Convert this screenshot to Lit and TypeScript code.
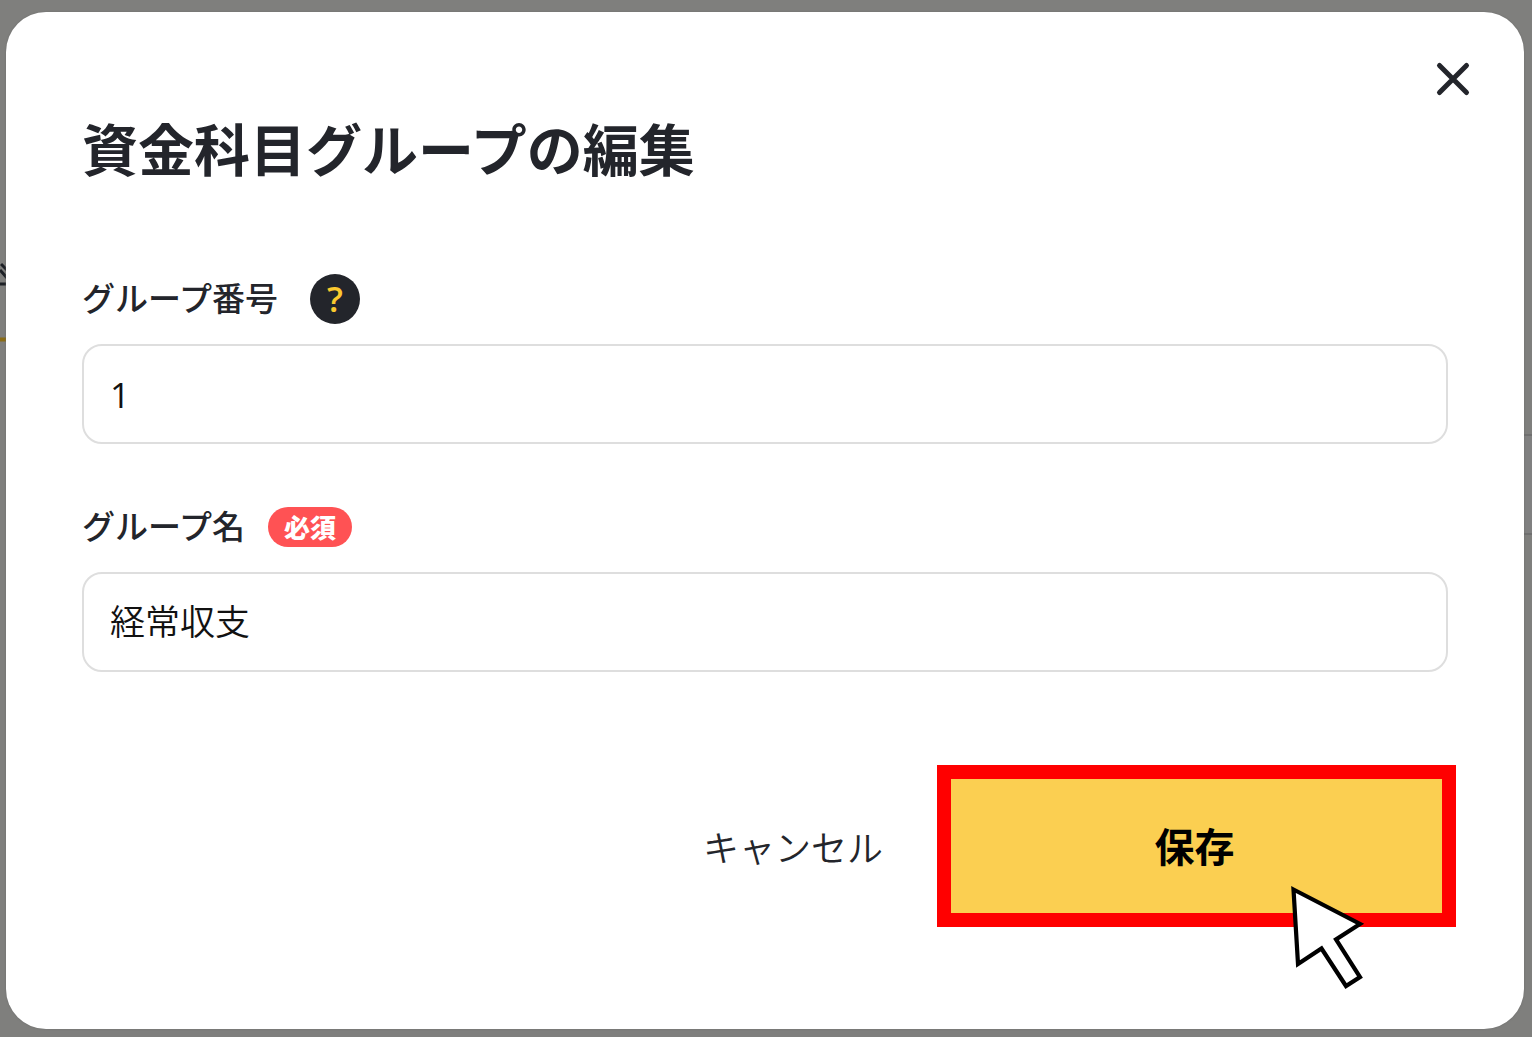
import { LitElement, html, css } from "lit";
import { customElement, state } from "lit/decorators.js";

@customElement("group-edit-dialog")
class GroupEditDialog extends LitElement {
  static styles = css`
    :host {
      display: flex;
      flex: 1;
      position: relative;
      font-family: "Noto Sans CJK JP", "Noto Sans", sans-serif;
      color: #23252b;
    }
    * {
      box-sizing: border-box;
    }
    button,
    input {
      font: inherit;
      color: inherit;
      margin: 0;
    }
    button {
      cursor: pointer;
    }
    .dialog {
      flex: 1;
      display: flex;
      flex-direction: column;
      padding: 39px 76px 102px;
      border-radius: 40px;
      background: #fff;
      box-shadow: 0 0 2px #6a6a69;
    }
    .close {
      display: grid;
      place-items: center;
      align-self: flex-end;
      width: 56px;
      height: 56px;
      margin-right: -33px;
      padding: 0;
      border: 0;
      background: none;
    }
    h1 {
      margin: 0 0 86px;
      font-size: 56px;
      line-height: 80px;
      font-weight: 700;
    }
    .field {
      display: flex;
      flex-direction: column;
      gap: 19px;
      margin-bottom: 57px;
    }
    .caption {
      display: flex;
      align-items: center;
      height: 52px;
      font-size: 33px;
      line-height: 48px;
      font-weight: 500;
    }
    label {
      padding-bottom: 4px;
    }
    .help {
      width: 50px;
      height: 50px;
      margin-left: 32px;
      padding: 0;
      border: 0;
      border-radius: 50%;
      background: #23252b;
      color: #fbc92f;
      font-family: "Open Sans", sans-serif;
      font-size: 35px;
      line-height: 50px;
      font-weight: 600;
      text-align: center;
    }
    .required {
      height: 40px;
      margin-left: 23px;
      padding: 0 16px;
      border-radius: 20px;
      background: #ff5254;
      color: #fff;
      font-size: 26px;
      line-height: 40px;
      font-weight: 900;
    }
    input {
      width: 100%;
      height: 100px;
      padding: 0 26px 6px;
      border: 2px solid #dedede;
      border-radius: 20px;
      background: #fff;
      color: #111;
      font-size: 35px;
      font-weight: 350;
      outline: none;
    }
    .numeric {
      padding-bottom: 0;
      font-family: "Open Sans", sans-serif;
      font-weight: 400;
    }
    .actions {
      display: flex;
      align-items: center;
      justify-content: flex-end;
      gap: 54px;
      margin: 36px -8px 0 0;
    }
    .cancel {
      padding: 0;
      border: 0;
      background: none;
      font-size: 36px;
      line-height: 52px;
      font-weight: 350;
    }
    .save {
      position: relative;
      display: flex;
      flex: 0 1 519px;
      border: 14px solid #f00;
    }
    .save button {
      flex: 1;
      height: 134px;
      padding: 0 4px 2px 0;
      border: 0;
      background: #fbcf51;
      color: #000;
      font-size: 40px;
      font-weight: 700;
    }
    .pointer {
      position: absolute;
      left: 338px;
      top: 102px;
      pointer-events: none;
    }
  `;

  @state() private number = "1";
  @state() private name = "経常収支";

  render() {
    return html`
      <section class="dialog" role="dialog" aria-labelledby="title">
        <button class="close" type="button" aria-label="閉じる">
          <svg width="36" height="36" viewBox="0 0 36 36" fill="none" stroke="#23252b" stroke-width="5" stroke-linecap="round">
            <path d="M4.500 4.500L31.500 31.500M31.500 4.500L4.500 31.500" />
          </svg>
        </button>
        <h1 id="title">資金科目グループの編集</h1>
        <div class="field">
          <div class="caption">
            <label for="number">グループ番号</label>
            <button class="help" type="button">?</button>
          </div>
          <input id="number" class="numeric" type="text" inputmode="numeric" .value=${this.number}
            @input=${(e: Event) => (this.number = (e.target as HTMLInputElement).value)} />
        </div>
        <div class="field">
          <div class="caption">
            <label for="name">グループ名</label>
            <span class="required">必須</span>
          </div>
          <input id="name" type="text" required .value=${this.name}
            @input=${(e: Event) => (this.name = (e.target as HTMLInputElement).value)} />
        </div>
        <div class="actions">
          <button class="cancel" type="button">キャンセル</button>
          <div class="save">
            <button type="button">保存</button>
            <svg class="pointer" width="80" height="110" viewBox="0 0 80 110">
              <path d="M4.500 8.500L71 43L47 58.500L71 96L57 105L32.500 67.500L9 83Z" fill="#fff" stroke="#000" stroke-width="4.200" />
            </svg>
          </div>
        </div>
      </section>
    `;
  }
}

@customElement("app-root")
class AppRoot extends LitElement {
  static styles = css`
    :host {
      display: flex;
      position: relative;
      box-sizing: border-box;
      min-height: 100vh;
      padding: 12px 8px 8px 6px;
      background: #7f7f7d;
    }
    .behind {
      position: absolute;
      top: 0;
    }
    .left {
      left: 0;
    }
    .right {
      right: 0;
    }
  `;

  render() {
    return html`
      <svg class="behind left" width="8" height="360" fill="none" aria-hidden="true">
        <path d="M1 264L8 271M0 270L8 279M0 284H8" stroke="#1d2026" stroke-width="3" />
        <path d="M0 339.500H8" stroke="#8a6c17" stroke-width="4" />
      </svg>
      <svg class="behind right" width="9" height="560" aria-hidden="true">
        <path d="M0 435H9V534H0Z" fill="#808080" />
        <path d="M0 435H9M0 534H9" stroke="#6f6f6f" stroke-width="2" />
      </svg>
      <group-edit-dialog></group-edit-dialog>
    `;
  }
}
